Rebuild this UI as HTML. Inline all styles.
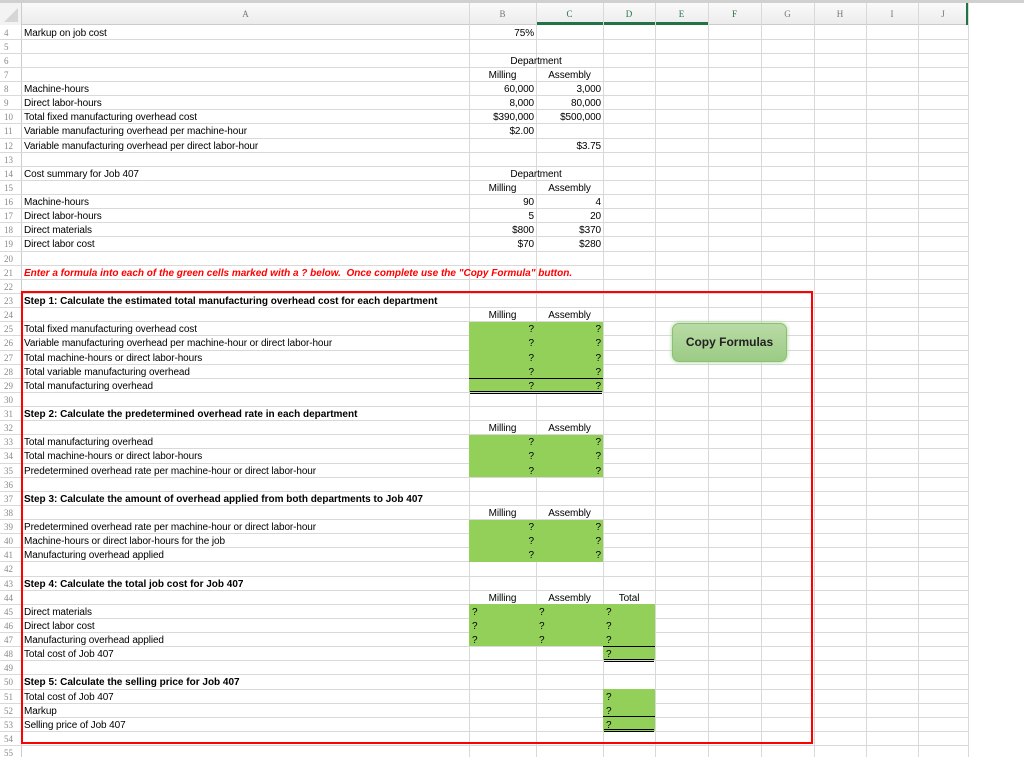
<!DOCTYPE html>
<html><head><meta charset="utf-8"><style>
*{margin:0;padding:0;box-sizing:border-box}
body{width:1024px;height:757px;overflow:hidden;background:#fff;position:relative;font-family:"Liberation Sans",Arial,sans-serif;font-size:10px;color:#000}
.a{position:absolute}
.hl{position:absolute;left:0;width:968px;height:1px;background:#d9d9d9}
.vl{position:absolute;top:3px;height:754px;width:1px;background:#d9d9d9}
.rn{position:absolute;left:0;width:20px;text-align:left;padding-left:4px;font-family:"Liberation Serif",serif;color:#888;font-size:9px;line-height:14px;margin-top:1px}
.t{position:absolute;line-height:14px;white-space:nowrap;letter-spacing:-0.1px;margin-top:2px}
.A{left:24px}
.B{left:469px;width:65px;text-align:right}
.C{left:536px;width:65px;text-align:right}
.Bc{left:469px;width:67px;text-align:center}
.Cc{left:536px;width:67px;text-align:center}
.Dc{left:603px;width:52px;text-align:center}
.BL{left:472px}.CL{left:539px}.DL{left:606px}
.g{position:absolute;background:#92d05a}
.b{font-weight:bold;letter-spacing:0}
.hd{position:absolute;top:3px;height:22px;line-height:22px;text-align:center;font-family:"Liberation Serif",serif;color:#777;font-size:9px}
.k{position:absolute;height:1px;background:#000}
</style></head><body>
<div class="a" style="left:0;top:0;width:1024px;height:3px;background:#d0d0d0"></div>
<div class="a" style="left:0;top:3px;width:968px;height:22px;background:linear-gradient(#fafafa,#ececec);border-bottom:1px solid #ccc"></div>
<div class="a" style="left:0;top:3px;width:22px;height:22px;background:#f3f3f3;border-right:1px solid #ccc"></div>
<div class="a" style="left:4px;top:8px;width:0;height:0;border-left:14px solid transparent;border-bottom:14px solid #d6d6d6"></div>
<div class="a" style="left:0;top:25px;width:22px;height:732px;background:#fff;border-right:1px solid #ccc"></div>
<div class="a" style="left:536px;top:22px;width:172px;height:3px;background:#217346"></div>
<div class="a" style="left:966px;top:3px;width:3px;height:22px;background:#217346"></div>

<div class="hd" style="left:22px;width:447px">A</div>
<div class="hd" style="left:469px;width:67px">B</div>
<div class="hd" style="left:536px;width:67px;color:#217346">C</div>
<div class="hd" style="left:603px;width:52px;color:#217346">D</div>
<div class="hd" style="left:655px;width:53px;color:#217346">E</div>
<div class="hd" style="left:708px;width:53px;color:#217346">F</div>
<div class="hd" style="left:761px;width:53px">G</div>
<div class="hd" style="left:814px;width:52px">H</div>
<div class="hd" style="left:866px;width:52px">I</div>
<div class="hd" style="left:918px;width:50px">J</div>

<div class="vl" style="left:469px"></div><div class="vl" style="left:536px"></div><div class="vl" style="left:603px"></div><div class="vl" style="left:655px"></div><div class="vl" style="left:708px"></div><div class="vl" style="left:761px"></div><div class="vl" style="left:814px"></div><div class="vl" style="left:866px"></div><div class="vl" style="left:918px"></div><div class="vl" style="left:968px"></div>

<div class="hl" style="top:39px"></div><div class="hl" style="top:53px"></div><div class="hl" style="top:67px"></div><div class="hl" style="top:81px"></div><div class="hl" style="top:95px"></div><div class="hl" style="top:109px"></div><div class="hl" style="top:123px"></div><div class="hl" style="top:138px"></div><div class="hl" style="top:152px"></div><div class="hl" style="top:166px"></div><div class="hl" style="top:180px"></div><div class="hl" style="top:194px"></div><div class="hl" style="top:208px"></div><div class="hl" style="top:222px"></div><div class="hl" style="top:236px"></div><div class="hl" style="top:251px"></div><div class="hl" style="top:265px"></div><div class="hl" style="top:279px"></div><div class="hl" style="top:293px"></div><div class="hl" style="top:307px"></div><div class="hl" style="top:321px"></div><div class="hl" style="top:335px"></div><div class="hl" style="top:350px"></div><div class="hl" style="top:364px"></div><div class="hl" style="top:378px"></div><div class="hl" style="top:392px"></div><div class="hl" style="top:406px"></div><div class="hl" style="top:420px"></div><div class="hl" style="top:434px"></div><div class="hl" style="top:448px"></div><div class="hl" style="top:463px"></div><div class="hl" style="top:477px"></div><div class="hl" style="top:491px"></div><div class="hl" style="top:505px"></div><div class="hl" style="top:519px"></div><div class="hl" style="top:533px"></div><div class="hl" style="top:547px"></div><div class="hl" style="top:561px"></div><div class="hl" style="top:576px"></div><div class="hl" style="top:590px"></div><div class="hl" style="top:604px"></div><div class="hl" style="top:618px"></div><div class="hl" style="top:632px"></div><div class="hl" style="top:646px"></div><div class="hl" style="top:660px"></div><div class="hl" style="top:674px"></div><div class="hl" style="top:689px"></div><div class="hl" style="top:703px"></div><div class="hl" style="top:717px"></div><div class="hl" style="top:731px"></div><div class="hl" style="top:745px"></div>

<div class="g" style="left:469px;top:322px;width:134px;height:70px"></div>
<div class="g" style="left:469px;top:435px;width:134px;height:42px"></div>
<div class="g" style="left:469px;top:520px;width:134px;height:42px"></div>
<div class="g" style="left:469px;top:604px;width:186px;height:42px"></div>
<div class="g" style="left:603px;top:646px;width:52px;height:14px"></div>
<div class="g" style="left:603px;top:689px;width:52px;height:42px"></div>
<div class="k" style="left:469px;top:378px;width:134px"></div>
<div class="k" style="left:470px;top:391px;width:132px"></div><div class="k" style="left:470px;top:393px;width:132px"></div>
<div class="k" style="left:603px;top:646px;width:52px"></div>
<div class="k" style="left:604px;top:659px;width:50px"></div><div class="k" style="left:604px;top:661px;width:50px"></div>
<div class="k" style="left:603px;top:716px;width:52px"></div>
<div class="k" style="left:604px;top:729px;width:50px"></div><div class="k" style="left:604px;top:731px;width:50px"></div>

<div class="a" style="left:21px;top:291px;width:792px;height:453px;border:2px solid #f00"></div>

<div class="rn" style="top:25px">4</div><div class="rn" style="top:39px">5</div><div class="rn" style="top:53px">6</div><div class="rn" style="top:67px">7</div><div class="rn" style="top:81px">8</div><div class="rn" style="top:95px">9</div><div class="rn" style="top:109px">10</div><div class="rn" style="top:123px">11</div><div class="rn" style="top:138px">12</div><div class="rn" style="top:152px">13</div><div class="rn" style="top:166px">14</div><div class="rn" style="top:180px">15</div><div class="rn" style="top:194px">16</div><div class="rn" style="top:208px">17</div><div class="rn" style="top:222px">18</div><div class="rn" style="top:236px">19</div><div class="rn" style="top:251px">20</div><div class="rn" style="top:265px">21</div><div class="rn" style="top:279px">22</div><div class="rn" style="top:293px">23</div><div class="rn" style="top:307px">24</div><div class="rn" style="top:321px">25</div><div class="rn" style="top:335px">26</div><div class="rn" style="top:350px">27</div><div class="rn" style="top:364px">28</div><div class="rn" style="top:378px">29</div><div class="rn" style="top:392px">30</div><div class="rn" style="top:406px">31</div><div class="rn" style="top:420px">32</div><div class="rn" style="top:434px">33</div><div class="rn" style="top:448px">34</div><div class="rn" style="top:463px">35</div><div class="rn" style="top:477px">36</div><div class="rn" style="top:491px">37</div><div class="rn" style="top:505px">38</div><div class="rn" style="top:519px">39</div><div class="rn" style="top:533px">40</div><div class="rn" style="top:547px">41</div><div class="rn" style="top:561px">42</div><div class="rn" style="top:576px">43</div><div class="rn" style="top:590px">44</div><div class="rn" style="top:604px">45</div><div class="rn" style="top:618px">46</div><div class="rn" style="top:632px">47</div><div class="rn" style="top:646px">48</div><div class="rn" style="top:660px">49</div><div class="rn" style="top:674px">50</div><div class="rn" style="top:689px">51</div><div class="rn" style="top:703px">52</div><div class="rn" style="top:717px">53</div><div class="rn" style="top:731px">54</div><div class="rn" style="top:745px">55</div>

<div class="t A" style="top:25px">Markup on job cost</div><div class="t B" style="top:25px">75%</div>
<div class="t" style="top:53px;left:469px;width:134px;text-align:center">Department</div>
<div class="t Bc" style="top:67px">Milling</div><div class="t Cc" style="top:67px">Assembly</div>
<div class="t A" style="top:81px">Machine-hours</div><div class="t B" style="top:81px">60,000</div><div class="t C" style="top:81px">3,000</div>
<div class="t A" style="top:95px">Direct labor-hours</div><div class="t B" style="top:95px">8,000</div><div class="t C" style="top:95px">80,000</div>
<div class="t A" style="top:109px">Total fixed manufacturing overhead cost</div><div class="t B" style="top:109px">$390,000</div><div class="t C" style="top:109px">$500,000</div>
<div class="t A" style="top:123px">Variable manufacturing overhead per machine-hour</div><div class="t B" style="top:123px">$2.00</div>
<div class="t A" style="top:138px">Variable manufacturing overhead per direct labor-hour</div><div class="t C" style="top:138px">$3.75</div>
<div class="t A" style="top:166px">Cost summary for Job 407</div>
<div class="t" style="top:166px;left:469px;width:134px;text-align:center">Department</div>
<div class="t Bc" style="top:180px">Milling</div><div class="t Cc" style="top:180px">Assembly</div>
<div class="t A" style="top:194px">Machine-hours</div><div class="t B" style="top:194px">90</div><div class="t C" style="top:194px">4</div>
<div class="t A" style="top:208px">Direct labor-hours</div><div class="t B" style="top:208px">5</div><div class="t C" style="top:208px">20</div>
<div class="t A" style="top:222px">Direct materials</div><div class="t B" style="top:222px">$800</div><div class="t C" style="top:222px">$370</div>
<div class="t A" style="top:236px">Direct labor cost</div><div class="t B" style="top:236px">$70</div><div class="t C" style="top:236px">$280</div>
<div class="t A b" style="top:265px;color:#f00;font-style:italic">Enter a formula into each of the green cells marked with a ? below.&nbsp; Once complete use the "Copy Formula" button.</div>

<div class="t A b" style="top:293px">Step 1: Calculate the estimated total manufacturing overhead cost for each department</div>
<div class="t Bc" style="top:307px">Milling</div><div class="t Cc" style="top:307px">Assembly</div>
<div class="t A" style="top:321px">Total fixed manufacturing overhead cost</div><div class="t B" style="top:321px">?</div><div class="t C" style="top:321px">?</div>
<div class="t A" style="top:335px">Variable manufacturing overhead per machine-hour or direct labor-hour</div><div class="t B" style="top:335px">?</div><div class="t C" style="top:335px">?</div>
<div class="t A" style="top:350px">Total machine-hours or direct labor-hours</div><div class="t B" style="top:350px">?</div><div class="t C" style="top:350px">?</div>
<div class="t A" style="top:364px">Total variable manufacturing overhead</div><div class="t B" style="top:364px">?</div><div class="t C" style="top:364px">?</div>
<div class="t A" style="top:378px">Total manufacturing overhead</div><div class="t B" style="top:378px">?</div><div class="t C" style="top:378px">?</div>

<div class="t A b" style="top:406px">Step 2: Calculate the predetermined overhead rate in each department</div>
<div class="t Bc" style="top:420px">Milling</div><div class="t Cc" style="top:420px">Assembly</div>
<div class="t A" style="top:434px">Total manufacturing overhead</div><div class="t B" style="top:434px">?</div><div class="t C" style="top:434px">?</div>
<div class="t A" style="top:448px">Total machine-hours or direct labor-hours</div><div class="t B" style="top:448px">?</div><div class="t C" style="top:448px">?</div>
<div class="t A" style="top:463px">Predetermined overhead rate per machine-hour or direct labor-hour</div><div class="t B" style="top:463px">?</div><div class="t C" style="top:463px">?</div>

<div class="t A b" style="top:491px">Step 3: Calculate the amount of overhead applied from both departments to Job 407</div>
<div class="t Bc" style="top:505px">Milling</div><div class="t Cc" style="top:505px">Assembly</div>
<div class="t A" style="top:519px">Predetermined overhead rate per machine-hour or direct labor-hour</div><div class="t B" style="top:519px">?</div><div class="t C" style="top:519px">?</div>
<div class="t A" style="top:533px">Machine-hours or direct labor-hours for the job</div><div class="t B" style="top:533px">?</div><div class="t C" style="top:533px">?</div>
<div class="t A" style="top:547px">Manufacturing overhead applied</div><div class="t B" style="top:547px">?</div><div class="t C" style="top:547px">?</div>

<div class="t A b" style="top:576px">Step 4: Calculate the total job cost for Job 407</div>
<div class="t Bc" style="top:590px">Milling</div><div class="t Cc" style="top:590px">Assembly</div><div class="t Dc" style="top:590px">Total</div>
<div class="t A" style="top:604px">Direct materials</div><div class="t BL" style="top:604px">?</div><div class="t CL" style="top:604px">?</div><div class="t DL" style="top:604px">?</div>
<div class="t A" style="top:618px">Direct labor cost</div><div class="t BL" style="top:618px">?</div><div class="t CL" style="top:618px">?</div><div class="t DL" style="top:618px">?</div>
<div class="t A" style="top:632px">Manufacturing overhead applied</div><div class="t BL" style="top:632px">?</div><div class="t CL" style="top:632px">?</div><div class="t DL" style="top:632px">?</div>
<div class="t A" style="top:646px">Total cost of Job 407</div><div class="t DL" style="top:646px">?</div>

<div class="t A b" style="top:674px">Step 5: Calculate the selling price for Job 407</div>
<div class="t A" style="top:689px">Total cost of Job 407</div><div class="t DL" style="top:689px">?</div>
<div class="t A" style="top:703px">Markup</div><div class="t DL" style="top:703px">?</div>
<div class="t A" style="top:717px">Selling price of Job 407</div><div class="t DL" style="top:717px">?</div>

<div class="a" style="left:672px;top:323px;width:115px;height:39px;border-radius:7px;background:linear-gradient(#b9dba6,#9ccb85);border:1px solid #8cbf74;box-shadow:0 0 4px #9fd08a;text-align:center;line-height:37px;font-size:12px;font-weight:bold;color:#222">Copy Formulas</div>
</body></html>
